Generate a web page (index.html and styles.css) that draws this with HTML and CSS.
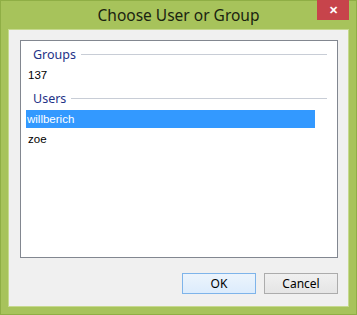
FILE: index.html
```html
<!DOCTYPE html>
<html lang="en">
<head>
    <meta charset="UTF-8">
    <title>Choose User or Group</title>
    <link rel="stylesheet" href="styles.css">
</head>
<body>

<div class="window">
    <div class="titlebar">
        <span class="title">Choose User or Group</span>
        <button class="close-btn">&#x2715;</button>
    </div>
    <div class="client">
        <div class="listbox">
            <div class="group-header"><span>Groups</span></div>
            <div class="item">137</div>
            <div class="group-header"><span>Users</span></div>
            <div class="item selected">willberich</div>
            <div class="item">zoe</div>
        </div>
        <div class="button-row">
            <button class="btn default">OK</button>
            <button class="btn">Cancel</button>
        </div>
    </div>
</div>

</body>
</html>
```

FILE: styles.css
```css
body {
    margin: 0;
    padding: 0;
    font-family: 'Noto Sans', 'DejaVu Sans', sans-serif;
}

.window {
    width: 357px;
    height: 315px;
    box-sizing: border-box;
    background-color: #a7c35b;
    border: 1px solid #8fae45;
    display: flex;
    flex-direction: column;
    padding: 0 7px 7px 7px;
}

.titlebar {
    height: 30px;
    display: flex;
    justify-content: center;
    align-items: center;
    position: relative;
}

.title {
    font-size: 15.5px;
    color: #1a2410;
    margin-top: -1px;
}

.close-btn {
    position: absolute;
    top: -1px;
    right: 0;
    width: 32px;
    height: 20px;
    border: none;
    background-color: #c7444b;
    color: #fff;
    font-size: 11px;
    font-weight: bold;
    padding: 0;
    line-height: 20px;
}

.client {
    flex: 1;
    background-color: #f0f0f0;
    display: flex;
    flex-direction: column;
    padding: 10px 10px 12px 11px;
    border: 1px solid #c6d98f;
}

.listbox {
    height: 218px;
    box-sizing: border-box;
    background-color: #fff;
    border: 1px solid #828790;
    padding: 1px 10px 0 5px;
    font-family: 'Liberation Sans', Arial, sans-serif;
}

.group-header {
    display: flex;
    align-items: center;
    gap: 5px;
    padding-left: 7px;
    height: 24px;
    font-family: 'Noto Sans', sans-serif;
    font-size: 12.5px;
    color: #1e3287;
}

.item + .group-header {
    margin-top: 2px;
}

.group-header::after {
    content: '';
    flex: 1;
    border-top: 1px solid #c8cdd6;
    margin-top: 1px;
}

.item {
    font-size: 11.5px;
    color: #000;
    height: 18px;
    line-height: 18px;
    padding-left: 2px;
    margin-right: 12px;
    margin-bottom: 2px;
}

.item.selected {
    background-color: #3399ff;
    color: #fff;
    padding-left: 1px;
}

.button-row {
    display: flex;
    justify-content: flex-end;
    gap: 8px;
    margin-top: 15px;
}

.btn {
    width: 74px;
    height: 21px;
    font-family: 'Noto Sans', sans-serif;
    font-size: 12px;
    color: #000;
    background: linear-gradient(#f0f0f0, #e5e5e5);
    border: 1px solid #acacac;
    padding: 0;
}

.btn.default {
    background: linear-gradient(#ecf4fc, #dcecfc);
    border-color: #7eb4ea;
}
```
